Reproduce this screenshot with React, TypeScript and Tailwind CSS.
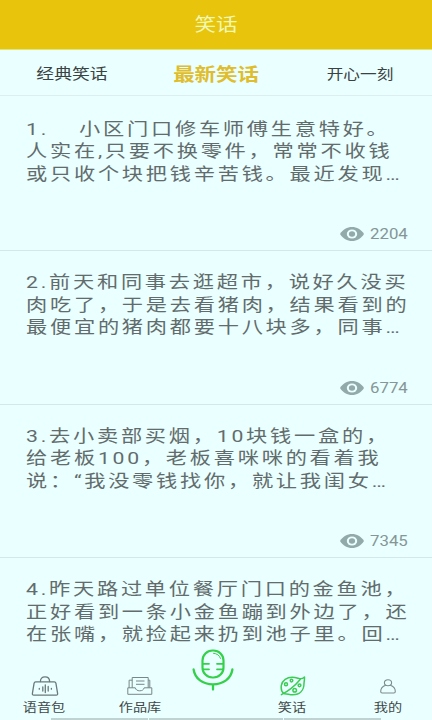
const jokes = [
  {
    lines: ['小区门口修车师傅生意特好。', '人实在,只要不换零件，常常不收钱', '或只收个块把钱辛苦钱。最近发现…'],
    prefix: '1.',
    views: 2204,
  },
  {
    lines: ['2.前天和同事去逛超市，说好久没买', '肉吃了，于是去看猪肉，结果看到的', '最便宜的猪肉都要十八块多，同事…'],
    views: 6774,
  },
  {
    lines: ['3.去小卖部买烟，10块钱一盒的，', '给老板100，老板喜咪咪的看着我', '说：“我没零钱找你，就让我闺女…'],
    views: 7345,
  },
  {
    lines: ['4.昨天路过单位餐厅门口的金鱼池，', '正好看到一条小金鱼蹦到外边了，还', '在张嘴，就捡起来扔到池子里。回…'],
  },
]

function EyeIcon() {
  return (
    <svg className="h-[14px] w-6" viewBox="0 0 24 14" fill="none">
      <path d="M0 7C3 2.3 7.2 0 12 0s9 2.3 12 7c-3 4.7-7.2 7-12 7S3 11.7 0 7Z" fill="#93aaaa" />
      <ellipse cx="12" cy="7" rx="5.2" ry="4.5" fill="#eaffff" />
      <ellipse cx="12" cy="7" rx="3.1" ry="2.7" fill="#93aaaa" />
    </svg>
  )
}

function BagIcon() {
  return (
    <svg className="h-5 w-7" viewBox="0 0 28 20" fill="none" stroke="#6b7979" strokeWidth="1.3" strokeLinecap="round" strokeLinejoin="round">
      <path d="M9.4 5.6C9.4 2.6 11 .9 14 .9s4.6 1.7 4.6 4.7" />
      <path d="M4.7 5.8h18.6c1 0 1.4.4 1.6 1.3l1.7 10.3c.2 1.1-.2 1.7-1.4 1.7H2.8c-1.2 0-1.6-.6-1.4-1.7L3.1 7.1c.2-.9.6-1.3 1.6-1.3Z" />
      <path d="M8.3 12.4v.8M11.8 11v4M14.3 9v7.5M17.2 10.5v4.5M20.4 12.4v.8" />
    </svg>
  )
}

function InboxIcon() {
  return (
    <svg className="h-5 w-7" viewBox="0 0 28 20" fill="none" stroke="#788787" strokeWidth="1" strokeLinejoin="round">
      <path d="M6.2 11.8V1.5h16v10.3" />
      <path d="M6.2 4.2H3.1v7.6M22.2 4.2h1.6v7.6" />
      <path d="M10 5h8.5M10 8.3h8.5" />
      <path d="M1.8 11.8h7.5c.5 2 2 3 4.4 3s4-1 4.5-3h7.6v6.5h-24Z" />
    </svg>
  )
}

function MicIcon() {
  return (
    <svg className="h-[42px] w-[42px]" viewBox="0 0 42 42" fill="none" stroke="#35d04b" strokeLinecap="round">
      <rect x="10.5" y="1.5" width="21" height="27" rx="10" strokeWidth="2.2" />
      <path d="M1.6 20.5C3 29.8 10.8 35.3 21 35.3S39 29.8 40.4 20.5M21 35.3v5.2" strokeWidth="2.3" />
      <path d="M11 14.8h6M11 20.3h6M25 14.8h6M25 20.3h6" strokeWidth="1.8" />
      <path d="M21.5 4.3c3.4.2 6 2 7 5.1" strokeWidth="1" />
    </svg>
  )
}

function LeafIcon() {
  return (
    <svg className="h-5 w-[26px]" viewBox="0 0 26 20" fill="none" stroke="#3ccb55" strokeWidth="1.5" strokeLinecap="round" strokeLinejoin="round">
      <path d="M4 17.7C1.3 15.8.9 12.6 1.3 9.5 2.2 4.1 7 1.2 12.4 1.3c3.1 0 5.4 1 7.3 1.4 1.8.2 3.6-.5 4.8-1.7.2 2.2-.4 4.1-.5 6.3 0 7.2-4.3 11.5-11.2 11.5-3.6 0-5.6-1.3-8.8-1.1Z" />
      <path d="M1.4 18.7C7.2 15.8 14.5 10.4 20.2 3.6" />
      <circle cx="11.5" cy="4.6" r="1.3" />
      <circle cx="6" cy="8.3" r="1.5" />
      <circle cx="19.5" cy="9.3" r="1.4" />
      <circle cx="14.7" cy="14.3" r="1.8" />
    </svg>
  )
}

function UserIcon() {
  return (
    <svg className="h-[15px] w-4" viewBox="0 0 16 15" fill="none" stroke="#7d8c8c" strokeWidth="1.1" strokeLinejoin="round">
      <ellipse cx="8" cy="3.7" rx="3.6" ry="3" />
      <path d="M5.7 6.2C2.5 7.2.7 9.6.7 12.6c0 1 .4 1.4 1.4 1.4h11.8c1 0 1.4-.4 1.4-1.4 0-3-1.8-5.4-5-6.4" />
    </svg>
  )
}

const navLabel = 'scale-x-[1.18] text-[12px] leading-[14px] whitespace-nowrap text-[#3f4848]'

export default function App() {
  return (
    <div className="relative flex h-[720px] w-[432px] flex-col overflow-hidden bg-[#eaffff] font-[Roboto,'Noto_Sans_CJK_SC',sans-serif]">
      <header className="flex h-[50px] shrink-0 items-center justify-center border-b border-[#dce87a] bg-[#e8c40c]">
        <h1 className="scale-x-[1.2] text-[18px] leading-6 text-[#eff8b4]">笑话</h1>
      </header>

      <nav className="grid h-[46px] shrink-0 grid-cols-3 items-center justify-items-center border-b border-[#dceeee] pt-1">
        <span className="scale-x-[1.19] text-[15px] text-[#3a4242]">经典笑话</span>
        <span className="scale-x-[1.19] text-[18px] font-bold text-[#e0bd2c]">最新笑话</span>
        <span className="scale-x-[1.19] text-[14px] text-[#3a4242]">开心一刻</span>
      </nav>

      <main className="flex-1 overflow-hidden pt-[2px]">
        {jokes.map((joke) => (
          <article key={joke.lines[0]} className="flex h-[153.4px] flex-col justify-between border-b border-[#d3e9e9] pt-5 pr-6 pb-2 pl-[25.5px] last:border-b-0">
            <div className="origin-left scale-x-[1.22] text-[17.4px] leading-[22.4px] tracking-[2.25px] whitespace-nowrap text-[#626c6c]">
              {joke.lines.map((line, i) => (
                <p key={line}>
                  {i === 0 && joke.prefix && <span className="inline-block w-[43.5px]">{joke.prefix}</span>}
                  {line}
                </p>
              ))}
            </div>
            {joke.views && (
              <div className="flex items-center justify-end gap-[6px]">
                <EyeIcon />
                <span className="w-[38px] text-[14px] leading-4 text-[#869696]">
                  <span className="inline-block origin-left scale-x-[1.2]">{joke.views}</span>
                </span>
              </div>
            )}
          </article>
        ))}
      </main>

      <footer className="absolute inset-x-0 bottom-0 h-[74px]">
        <div className="relative flex h-full items-end pb-[5px]">
          <div className="flex w-[89px] shrink-0 flex-col items-center gap-[5px]">
            <BagIcon />
            <span className={navLabel}>语音包</span>
          </div>
          <div className="flex w-[102px] shrink-0 flex-col items-center gap-[5px]">
            <InboxIcon />
            <span className={navLabel}>作品库</span>
          </div>
          <div className="flex w-[43px] shrink-0 justify-center self-start pt-[3px]">
            <MicIcon />
          </div>
          <div className="ml-3 flex w-[93px] shrink-0 flex-col items-center gap-[5px]">
            <LeafIcon />
            <span className={navLabel}>笑话</span>
          </div>
          <div className="flex w-[93px] flex-col items-center gap-[7px] pl-[5px]">
            <UserIcon />
            <span className={navLabel}>我的</span>
          </div>
        </div>
        <div className="absolute bottom-0 left-[51px] flex h-[2px] w-[330px] gap-px">
          <div className="w-[97px] bg-[#bfd3d3]" />
          <div className="w-[134px] bg-[#bfd3d3]" />
          <div className="flex-1 bg-[#bfd3d3]" />
        </div>
      </footer>
    </div>
  )
}
